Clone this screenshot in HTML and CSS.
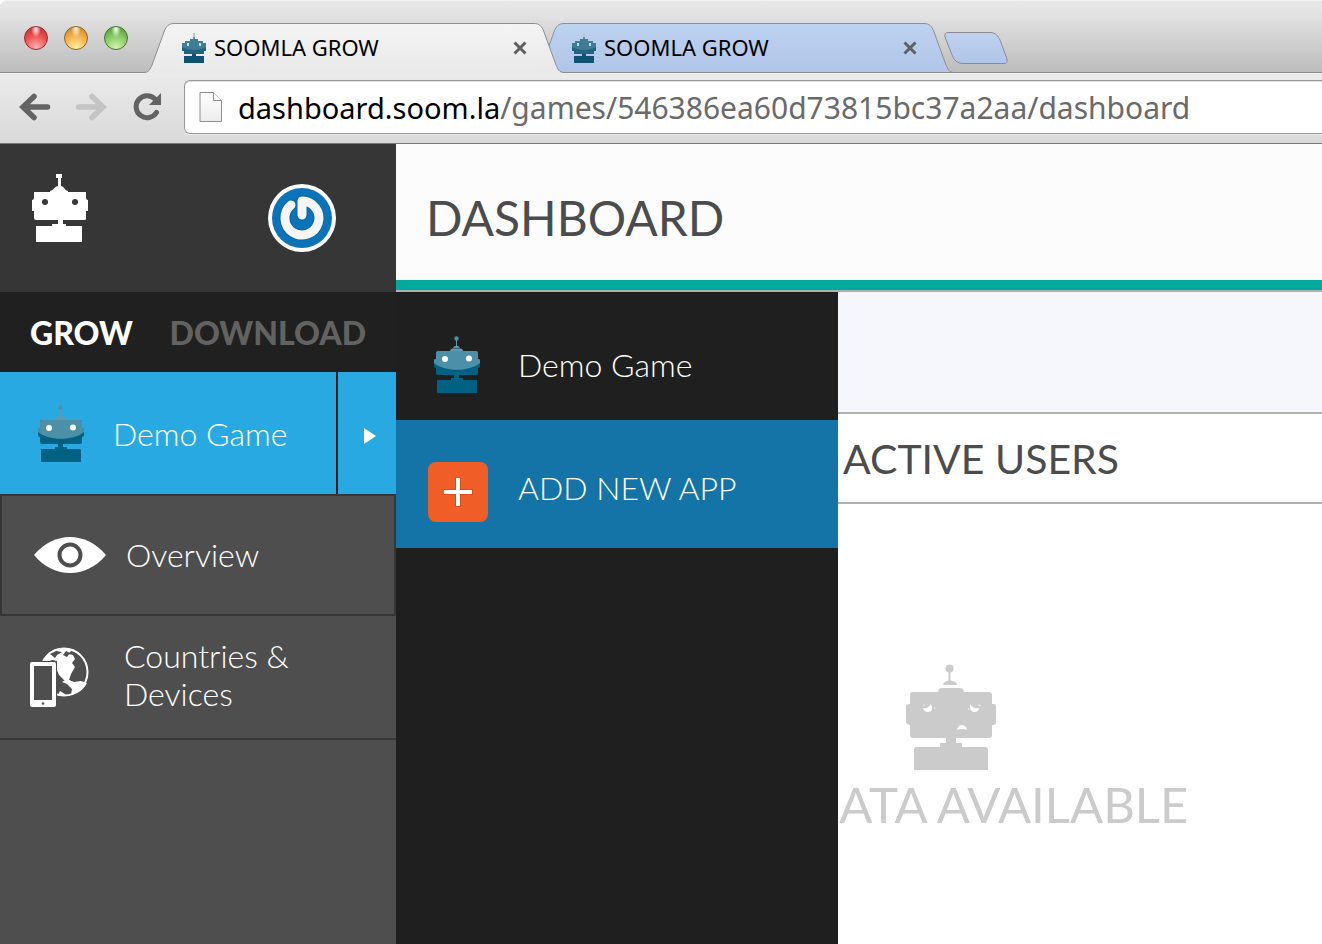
FILE: index.html
```html
<!DOCTYPE html>
<html lang="en">
<head>
<meta charset="utf-8">
<title>SOOMLA GROW</title>
<link rel="stylesheet" href="styles.css">
</head>
<body>
<svg class="defs" aria-hidden="true">
  <defs>
    <linearGradient id="active-fill" x1="0" y1="0" x2="0" y2="1"><stop offset="0" stop-color="#f4f4f4"/><stop offset="1" stop-color="#e9e9e9"/></linearGradient>
    <linearGradient id="idle-fill" x1="0" y1="0" x2="0" y2="1"><stop offset="0" stop-color="#bed3f1"/><stop offset="1" stop-color="#b0c5e8"/></linearGradient>
    <linearGradient id="page-fill" x1="0" y1="0" x2="0" y2="1"><stop offset="0" stop-color="#fff"/><stop offset="1" stop-color="#ececec"/></linearGradient>
  </defs>
  <symbol id="edge-left" viewBox="0 0 30 50">
    <path d="M0 50 V49.500 C5 49.500 6 46 8 42 L20 9 C22 3 25 .5 30 .5 V50 Z" stroke="none"/>
    <path d="M0 49.500 C5 49.500 6 46 8 42 L20 9 C22 3 25 .5 30 .5" fill="none" stroke="#8e8e8e"/>
  </symbol>
  <symbol id="edge-right" viewBox="0 0 30 50">
    <path d="M30 50 V49.500 C25 49.500 24 46 22 42 L10 9 C8 3 5 .5 0 .5 V50 Z" stroke="none"/>
    <path d="M30 49.500 C25 49.500 24 46 22 42 L10 9 C8 3 5 .5 0 .5" fill="none" stroke="#8e8e8e"/>
  </symbol>
  <symbol id="close" viewBox="0 0 16 16"><path d="M2.500 2.500 L13.500 13.500 M13.500 2.500 L2.500 13.500" fill="none" stroke="currentColor" stroke-width="3"/></symbol>
  <symbol id="favicon" viewBox="0 0 24 30">
    <path d="M11 0h2v4h-2z" fill="#a9cdd8"/><path d="M11 4h2v3h-2z" fill="#5794a8"/>
    <path d="M8 6h8v2h5v2h3v8h-2v3H2v-3H0v-8h3V8h5z" fill="#3f7d97"/>
    <path d="M0 14c7 4 17 4 24 0v4h-2v3H2v-3H0z" fill="#226480"/>
    <path d="M5 10h2v3H5zM17 10h2v3h-2z" fill="#b7e3ea"/>
    <path d="M10 21h4v2h8v7H2v-7h8z" fill="#105274"/>
  </symbol>
  <symbol id="robot-color" viewBox="0 0 46 57">
    <circle cx="22.500" cy="2.500" r="2.200" fill="#4b90a8"/>
    <path d="M22 4h1v6h-1zM19 12c1-3 6-3 7 0zM16 15c0-2 2-2.500 4-2.500h5c3 0 4 .5 4 2.500z" fill="#5a9bb2"/>
    <path d="M4 15h38q2 0 2 2v6h1q1 0 1 2v5q0 2-2 2v5q0 2-2 2H4q-2 0-2-2v-5q-2 0-2-2v-5q0-2 1-2h1v-6q0-2 2-2z" fill="#006182"/>
    <path d="M4 15h38q2 0 2 2v6h1q1 0 1 2v2c-10 9-36 9-46 0v-2q0-2 1-2h1v-6q0-2 2-2z" fill="#4b90a8"/>
    <path d="M20 39h5v3h4v2h13q1 0 1 1v12H3V45q0-1 1-1h13v-2h3z" fill="#006182"/>
    <circle cx="11" cy="23" r="3" fill="#fff"/><circle cx="35" cy="22.500" r="3" fill="#fff"/>
  </symbol>
</svg>

<header class="browser">
  <div class="tab-strip">
    <div class="lights">
      <button class="light red" aria-label="Close window"></button>
      <button class="light amber" aria-label="Minimize window"></button>
      <button class="light green" aria-label="Zoom window"></button>
    </div>
    <div class="tab active">
      <svg class="edge"><use href="#edge-left"/></svg>
      <div class="tab-body">
        <svg class="favicon"><use href="#favicon"/></svg>
        <span class="tab-title">SOOMLA GROW</span>
        <button class="tab-close" aria-label="Close tab"><svg><use href="#close"/></svg></button>
      </div>
      <svg class="edge"><use href="#edge-right"/></svg>
    </div>
    <div class="tab idle">
      <svg class="edge"><use href="#edge-left"/></svg>
      <div class="tab-body">
        <svg class="favicon"><use href="#favicon"/></svg>
        <span class="tab-title">SOOMLA GROW</span>
        <button class="tab-close" aria-label="Close tab"><svg><use href="#close"/></svg></button>
      </div>
      <svg class="edge"><use href="#edge-right"/><path d="M0 49.500H30" stroke="#8e8e8e"/></svg>
    </div>
    <button class="new-tab" aria-label="New tab">
      <svg viewBox="0 0 64 32"><path d="M4 .5H46C52 .5 54 4 56 8L63 27Q64 31.500 60 31.500H19C13 31.500 10 28 8 23L1 5Q0 .5 4 .5Z" fill="url(#idle-fill)" stroke="#8a8c92"/></svg>
    </button>
  </div>
  <div class="toolbar">
    <div class="tools">
      <button class="tool" aria-label="Back"><svg viewBox="0 0 32 28"><path d="M15 3.500 L4 14 L15 24.500 M5 14 H28.500" fill="none" stroke="#636363" stroke-width="5.500" stroke-linecap="round" stroke-linejoin="miter"/></svg></button>
      <button class="tool" aria-label="Forward"><svg viewBox="0 0 32 28"><path d="M17 3.500 L28 14 L17 24.500 M27 14 H3.500" fill="none" stroke="#c4c4c4" stroke-width="5.500" stroke-linecap="round"/></svg></button>
      <button class="tool" aria-label="Reload"><svg viewBox="0 0 32 28"><path d="M25.500 19.500 A11 11 0 1 1 24 6" fill="none" stroke="#636363" stroke-width="5" stroke-linecap="round"/><path d="M30 0 V12 H18 Z" fill="#636363"/></svg></button>
    </div>
    <div class="address">
      <svg class="page-icon" viewBox="0 0 24 32"><path d="M1 1.500H14.500L22.500 9.500V30.500H1Z" fill="url(#page-fill)" stroke="#8f8f8f"/><path d="M14.500 1.500V9.500H22.500" fill="#fff" stroke="#8f8f8f"/></svg>
      <label class="host" for="url">dashboard.soom.la</label>
      <input class="path" id="url" type="text" value="/games/546386ea60d73815bc37a2aa/dashboard">
    </div>
  </div>
</header>

<div class="app">
  <aside class="sidebar">
    <div class="brand">
      <a href="#" aria-label="Home"><svg class="logo" viewBox="0 0 56 68" fill="#fff"><path d="M24 0h6v4h-1v8c4 1 3 4 7 5v1h18v6q0 2 2 2v11h-2v8q0 1-2 1H31v4h3v2h16v16H4V52h16v-2h6v-4H4q-2 0-2-2v-7H0V26q2 0 2-2v-6h16v-1c4-1 4-4 8-5V4h-2z"/><circle cx="13" cy="28" r="3" fill="#363636"/><circle cx="43" cy="28" r="3" fill="#363636"/></svg></a>
      <button class="avatar" aria-label="Account"><svg viewBox="0 0 68 68"><circle cx="34" cy="34" r="34" fill="#fff"/><circle cx="34" cy="34" r="30" fill="#0b73b8"/><path d="M23 21 A17 17 0 1 0 34 17 V31" fill="none" stroke="#075a96" stroke-opacity=".45" stroke-width="11" stroke-linecap="round" stroke-linejoin="round"/><path d="M23 21 A17 17 0 1 0 34 17 V31" fill="none" stroke="#f5f5f5" stroke-width="9" stroke-linecap="round" stroke-linejoin="round"/></svg></button>
    </div>
    <nav class="modes">
      <a class="mode current" href="#">GROW</a>
      <a class="mode" href="#">DOWNLOAD</a>
    </nav>
    <div class="game-row">
      <a class="game" href="#"><svg class="robot"><use href="#robot-color"/></svg><span>Demo Game</span></a>
      <button class="expand" aria-label="Choose game"><svg viewBox="0 0 14 18"><path d="M1 1 L13 9 L1 17Z" fill="#fff"/></svg></button>
    </div>
    <nav class="menu">
      <a class="menu-item selected" href="#">
        <svg class="eye" viewBox="0 0 72 36"><path d="M0 18 C20-6 52-6 72 18 C52 42 20 42 0 18Z" fill="#fff"/><circle cx="36" cy="18" r="10.500" fill="none" stroke="#4e4e4e" stroke-width="4"/></svg>
        <span>Overview</span>
      </a>
      <a class="menu-item" href="#">
        <svg class="devices" viewBox="0 0 60 62">
          <circle cx="34" cy="26" r="23.500" fill="none" stroke="#fff" stroke-width="2"/>
          <path d="M12 17C16 7 24 2 34 2C39 2 44 3 47 6L41 5L38 8L43 9L45 13L42 17L45 21L41 28L38 37L34 34L29 29L26 22L27 15L22 14L17 16Z" fill="#fff"/>
          <path d="M37 33L44 36L51 35L57 37C54 43 48 48 41 49L42 43L37 38L32 36Z" fill="#fff"/>
          <path d="M20 8L26 5L32 6L27 9L25 12Z M36 5L40 7L37 11L33 9Z" fill="#4e4e4e"/>
          <path d="M30 45L38 50L28 49Z" fill="#fff"/>
          <rect x="-1" y="15" width="28" height="46" fill="#4e4e4e"/>
          <rect x="0" y="16" width="26" height="45" rx="2" fill="#fff"/><rect x="4" y="20" width="18" height="34" fill="#4e4e4e"/><circle cx="13" cy="57.500" r="1.300" fill="#555"/>
        </svg>
        <span>Countries &amp; Devices</span>
      </a>
    </nav>
  </aside>

  <main class="content">
    <h1 class="page-title">DASHBOARD</h1>
    <div class="filters"></div>
    <h2 class="panel-title">ACTIVE USERS</h2>
    <section class="empty">
      <svg class="sad-robot" viewBox="-1 0 92 106" fill="#cbcbcb">
        <circle cx="43.500" cy="4.500" r="4"/><path d="M42.500 8h2v10h-2z"/><path d="M37 21c1-6 13-6 14 0z"/>
        <path d="M32 29c0-4 2-5 4-5h17c3 0 5 1 5 5z"/>
        <path d="M7 28h76q3 0 3 3v9h2q2 0 2 2v17q0 2-4 2v10q0 3-3 3H7q-3 0-3-3V61q-4-1-4-3V42q0-2 4-2v-9q0-3 3-3z"/>
        <path d="M40 73h10v6h6v4h23q3 0 3 3v20H8V86q0-3 3-3h23v-4h6z"/>
        <path d="M17 44q5 1 8-4q3 8-3 8q-4 0-5-4zM64 40q3 5 9 4q0 4-5 4q-5-1-4-8zM51 66q1-5 5-5t5 5q-5-2-10 0z" fill="#fff"/>
        <path d="M17 40l2 1-2 1zM28 43l2 1-2 1zM62 44l2 1-2 1zM74 40l1 2-3 0z" fill="#eee"/>
      </svg>
      <p class="empty-text">NO DATA AVAILABLE</p>
    </section>
  </main>

  <div class="flyout">
    <a class="fly-item" href="#"><svg class="robot"><use href="#robot-color"/></svg><span>Demo Game</span></a>
    <button class="fly-item add"><svg class="plus" viewBox="0 0 60 60"><rect width="60" height="60" rx="8" fill="#f15d27"/><path d="M30 16V45M16 30H45" stroke="#d94c18" stroke-width="6"/><path d="M30 16V44M16 30H44" stroke="#fff" stroke-width="4"/></svg><span>ADD NEW APP</span></button>
  </div>
</div>
</body>
</html>
```
FILE: styles.css
```css
* { box-sizing: border-box; }
html, body { height: 100%; }
body {
  margin: 0;
  display: flex;
  flex-direction: column;
  overflow: hidden;
  background: #fff;
  font-family: Lato, sans-serif;
}
a { color: inherit; text-decoration: none; }
button { border: 0; padding: 0; background: none; font: inherit; color: inherit; }
svg { display: block; flex: none; }
.defs { position: absolute; width: 0; height: 0; }

.browser { flex: none; font-family: "Noto Sans", "Open Sans", sans-serif; }
.tab-strip {
  display: flex;
  align-items: flex-end;
  height: 73px;
  overflow: hidden;
  border-top-left-radius: 8px;
  background: linear-gradient(#e9e9e9, #e2e2e2 20%, #bcbcbc);
  box-shadow: inset 0 -1px #8e8e8e, inset 0 1px #f2f2f2;
}
.lights { display: flex; gap: 16px; width: 144px; height: 73px; padding: 26px 0 0 24px; flex: none; }
.light { width: 24px; height: 24px; border-radius: 50%; }
.red { border: 1px solid #8d3030; background: radial-gradient(ellipse at 50% 10%, #ffd5d5 5%, transparent 30%), radial-gradient(circle at 50% 95%, #ffb5b5, #ee4b4b 55%, #b92e2e); }
.amber { border: 1px solid #8f642c; background: radial-gradient(ellipse at 50% 10%, #ffeccb 5%, transparent 30%), radial-gradient(circle at 50% 95%, #fff29c, #f3ae48 55%, #c17b26); }
.green { border: 1px solid #447632; background: radial-gradient(ellipse at 50% 10%, #e5f8d8 5%, transparent 30%), radial-gradient(circle at 50% 95%, #d4f6ab, #83c762 55%, #4d8e35); }
.tab { display: flex; width: 420px; height: 50px; min-width: 0; }
.tab.active { position: relative; z-index: 1; fill: url(#active-fill); }
.tab.idle { margin-left: -30px; fill: url(#idle-fill); }
.edge { width: 30px; height: 50px; }
.tab-body {
  display: flex;
  align-items: center;
  flex: 1;
  padding: 0 6px 1px 8px;
  border-top: 1px solid #8e8e8e;
}
.active .tab-body { background: linear-gradient(#f4f4f4, #e9e9e9); }
.idle .tab-body { padding-bottom: 0; background: linear-gradient(#bed3f1, #b0c5e8); border-bottom: 1px solid #8e8e8e; }
.favicon { width: 24px; height: 30px; margin-right: 8px; }
.tab-title { flex: 1; padding-bottom: 2px; font-size: 22px; line-height: 28px; color: #000; white-space: nowrap; }
.tab-close { color: #606060; }
.tab-close svg { width: 16px; height: 16px; }
.new-tab { width: 64px; margin: 0 0 9px -10px; }
.new-tab svg { width: 64px; height: 32px; }

.toolbar {
  display: flex;
  align-items: center;
  height: 71px;
  padding: 0 0 2px 19px;
  border-bottom: 1px solid #7b7b7b;
  background: linear-gradient(#ebebeb, #d9d9d9);
}
.tools { display: flex; gap: 24px; width: 165px; flex: none; }
.tool svg { width: 32px; height: 28px; }
.address {
  display: flex;
  align-items: center;
  flex: 1;
  min-width: 0;
  height: 54px;
  padding-left: 14px;
  border: 1px solid #989898;
  border-right: 0;
  border-radius: 6px 0 0 6px;
  background: #fff;
  box-shadow: inset 0 1px 1px #ddd, 0 1px #eee;
  font-size: 29px;
}
.page-icon { width: 24px; height: 32px; margin-right: 15px; }
.host { color: #000; }
.path { flex: 1; min-width: 0; padding: 0; border: 0; outline: 0; background: none; font: inherit; font-size: 30px; color: #6a6a6a; }

.app { position: relative; display: flex; flex: 1; min-height: 0; }
.sidebar { width: 396px; flex: none; background: #4e4e4e; color: #fff; }
.brand { display: flex; justify-content: space-between; align-items: flex-start; height: 148px; padding: 30px 60px 0 32px; background: #363636; }
.logo { width: 56px; height: 68px; }
.avatar { margin-top: 10px; }
.avatar svg { width: 68px; height: 68px; }
.modes { display: flex; align-items: center; justify-content: space-between; height: 80px; padding: 0 30px; background: #202020; font-size: 32px; font-weight: 900; }
.mode { color: #626262; }
.mode.current { color: #fff; }
.game-row { display: flex; gap: 2px; height: 122px; background: #202020; font-size: 32px; font-weight: 300; }
.game { display: flex; align-items: center; gap: 29px; flex: 1; padding-left: 38px; background: #29a9e1; }
.robot { width: 46px; height: 57px; }
.expand { display: flex; align-items: center; justify-content: center; width: 58px; padding: 6px 0 0 6px; background: #29a9e1; }
.expand svg { width: 14px; height: 18px; }
.menu { font-size: 32px; font-weight: 300; line-height: 38px; }
.menu-item { display: flex; align-items: center; height: 124px; padding: 0 60px 0 30px; border-bottom: 2px solid #363636; }
.menu-item span { padding-bottom: 4px; }
.menu-item.selected { height: 122px; padding-left: 32px; border: 2px solid #363636; }
.menu-item.selected span { padding-bottom: 0; }
.eye { width: 72px; height: 36px; margin-right: 20px; }
.devices { width: 60px; height: 62px; margin-right: 34px; }

.content { flex: 1; min-width: 0; overflow: hidden; color: #4c4c4c; }
.page-title {
  height: 148px;
  margin: 0;
  padding: 44px 30px 0;
  border-bottom: 2px solid #b0b0b0;
  background: #fcfcfc;
  box-shadow: inset 0 -10px #00a99d;
  font-size: 48px;
  font-weight: 400;
  line-height: 60px;
}
.filters { height: 122px; border-bottom: 2px solid #b0b0b0; background: #f6f7fc; }
.panel-title {
  height: 90px;
  margin: 0;
  padding-left: 447px;
  border-bottom: 2px solid #b0b0b0;
  font-size: 41px;
  font-weight: 400;
  line-height: 90px;
}
.empty { display: flex; flex-direction: column; align-items: center; padding: 160px 0 0 184px; color: #cbcbcb; }
.sad-robot { width: 92px; height: 106px; }
.empty-text { margin: 4px 0 0; font-size: 49px; line-height: 60px; white-space: nowrap; }

.flyout { position: absolute; top: 148px; bottom: 0; left: 396px; width: 442px; background: #1f1f1f; color: #fff; font-size: 32px; font-weight: 300; }
.fly-item { display: flex; align-items: center; width: 100%; height: 128px; padding: 16px 38px 0; gap: 38px; text-align: left; }
.fly-item.add { padding: 16px 32px 0; gap: 30px; background: #1474a8; }
.plus { width: 60px; height: 60px; }
.add span { padding-bottom: 10px; }
```
